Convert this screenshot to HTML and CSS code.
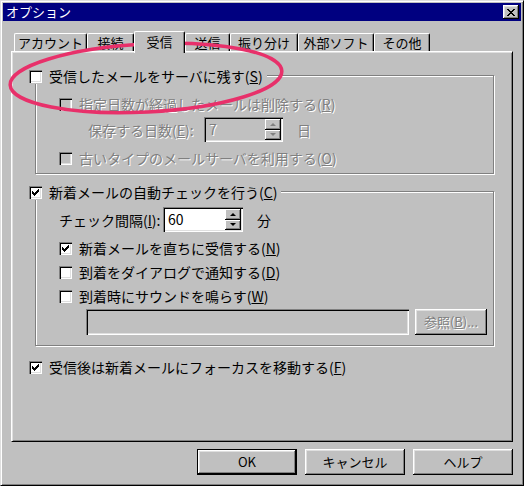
FILE: index.html
```html
<!DOCTYPE html>
<html lang="ja">
<head>
<meta charset="utf-8">
<title>オプション</title>
<link rel="stylesheet" href="styles.css">
</head>
<body>
<div class="window">
  <div class="titlebar">
    <span class="title">オプション</span>
    <span class="close"><svg width="8" height="7" viewBox="0 0 8 7" shape-rendering="crispEdges"><path fill="#000" d="M0 0h2v1h-2z M6 0h2v1h-2z M1 1h2v1h-2z M5 1h2v1h-2z M2 2h4v1h-4z M3 3h2v1h-2z M2 4h4v1h-4z M1 5h2v1h-2z M5 5h2v1h-2z M0 6h2v1h-2z M6 6h2v1h-2z"/></svg></span>
  </div>
  <div class="tabs">
    <div class="tab t1">アカウント</div>
    <div class="tab t2">接続</div>
    <div class="tab t3 sel">受信</div>
    <div class="tab t4">送信</div>
    <div class="tab t5">振り分け</div>
    <div class="tab t6">外部ソフト</div>
    <div class="tab t7">その他</div>
  </div>
  <div class="panel">
    <div class="group g1">
      <div class="legend"><span class="cb"></span><span>受信したメールをサーバに残す(<u>S</u>)</span></div>
      <div class="row ind r-del"><span class="cb dis"></span><span class="disabled">指定日数が経過したメールは削除する(<u>R</u>)</span></div>
      <div class="spinrow r-days">
        <span class="lbl lbl-days disabled">保存する日数(<u>E</u>):</span>
        <div class="spin dis w79"><span class="spin-val disabled">7</span><span class="spin-btns"><span class="sb"><i class="up"></i></span><span class="sb"><i class="dn"></i></span></span></div>
        <span class="unit disabled">日</span>
      </div>
      <div class="row ind r-old"><span class="cb dis"></span><span class="disabled">古いタイプのメールサーバを利用する(<u>O</u>)</span></div>
    </div>
    <div class="group g2">
      <div class="legend"><span class="cb"><svg width="7" height="7" viewBox="0 0 7 7" shape-rendering="crispEdges"><path fill="#000" d="M6 0h1v1h-1z M5 1h2v1h-2z M0 2h1v1h-1z M4 2h3v1h-3z M0 3h2v1h-2z M3 3h3v1h-3z M0 4h5v1h-5z M1 5h3v1h-3z M2 6h1v1h-1z"/></svg></span><span>新着メールの自動チェックを行う(<u>C</u>)</span></div>
      <div class="spinrow r-int">
        <span class="lbl lbl-int">チェック間隔(<u>I</u>):</span>
        <div class="spin w80"><span class="spin-val">60</span><span class="spin-btns"><span class="sb"><i class="up"></i></span><span class="sb"><i class="dn"></i></span></span></div>
        <span class="unit">分</span>
      </div>
      <div class="row ind r-next"><span class="cb"><svg width="7" height="7" viewBox="0 0 7 7" shape-rendering="crispEdges"><path fill="#000" d="M6 0h1v1h-1z M5 1h2v1h-2z M0 2h1v1h-1z M4 2h3v1h-3z M0 3h2v1h-2z M3 3h3v1h-3z M0 4h5v1h-5z M1 5h3v1h-3z M2 6h1v1h-1z"/></svg></span><span>新着メールを直ちに受信する(<u>N</u>)</span></div>
      <div class="row ind r-next"><span class="cb"></span><span>到着をダイアログで通知する(<u>D</u>)</span></div>
      <div class="row ind r-next"><span class="cb"></span><span>到着時にサウンドを鳴らす(<u>W</u>)</span></div>
      <div class="filerow">
        <div class="field"></div>
        <div class="btn small"><span class="disabled">参照(<u>B</u>)...</span></div>
      </div>
    </div>
    <div class="row r-last"><span class="cb"><svg width="7" height="7" viewBox="0 0 7 7" shape-rendering="crispEdges"><path fill="#000" d="M6 0h1v1h-1z M5 1h2v1h-2z M0 2h1v1h-1z M4 2h3v1h-3z M0 3h2v1h-2z M3 3h3v1h-3z M0 4h5v1h-5z M1 5h3v1h-3z M2 6h1v1h-1z"/></svg></span><span>受信後は新着メールにフォーカスを移動する(<u>F</u>)</span></div>
  </div>
  <div class="buttons">
    <div class="btn default">OK</div>
    <div class="btn">キャンセル</div>
    <div class="btn">ヘルプ</div>
  </div>
  <svg class="ring" width="524" height="486" viewBox="0 0 524 486"><ellipse cx="146" cy="78" rx="136" ry="34" transform="rotate(-3 146 78)" fill="none" stroke="#e8306a" stroke-width="3.5"/></svg>
</div>
</body>
</html>
```

FILE: styles.css
```css
body {
  margin: 0;
  background: #c0c0c0;
  font-family: "Noto Sans CJK JP", "Noto Sans", sans-serif;
  font-size: 14px;
  line-height: 16px;
  color: #000;
}
u { text-underline-offset: 1px; }

.window {
  position: relative;
  width: 524px;
  height: 486px;
  box-sizing: border-box;
  border: 1px solid;
  border-color: #dfdfdf #000 #000 #dfdfdf;
  box-shadow: inset 1px 1px #fff, inset -1px -1px #808080;
  padding: 2px;
  background: #c0c0c0;
}

.titlebar {
  height: 18px;
  background: #000080;
  color: #fff;
  display: flex;
  align-items: center;
  justify-content: space-between;
  padding: 0 2px 0 3px;
  font-size: 13px;
}
.close {
  width: 16px;
  height: 14px;
  box-sizing: border-box;
  background: #c0c0c0;
  box-shadow: inset -1px -1px #000, inset 1px 1px #fff, inset -2px -2px #808080, inset 2px 2px #dfdfdf;
  display: flex;
  align-items: center;
  justify-content: center;
}

.tabs {
  display: flex;
  align-items: flex-end;
  height: 20px;
  margin: 10px 8px 0;
  padding-left: 3px;
}
.tab {
  height: 18px;
  box-sizing: border-box;
  border-top: 1px solid #fff;
  border-left: 1px solid #fff;
  border-right: 1px solid #000;
  border-radius: 2px 2px 0 0;
  box-shadow: inset -1px 0 #808080;
  background: #c0c0c0;
  display: flex;
  align-items: center;
  justify-content: center;
  font-size: 13px;
  flex: none;
}
.tab.sel {
  height: 22px;
  margin-bottom: -2px;
  position: relative;
  z-index: 1;
  padding-bottom: 2px;
}
.t1 { width: 73px; }
.t2 { width: 47px; }
.t3 { width: 51px; }
.t4 { width: 45px; }
.t5 { width: 68px; }
.t6 { width: 76px; }
.t7 { width: 56px; }

.panel {
  margin: 0 8px;
  height: 391px;
  box-sizing: border-box;
  border: 1px solid;
  border-color: #fff #000 #000 #fff;
  box-shadow: inset 1px 1px #dfdfdf, inset -1px -1px #808080;
  padding: 23px 0 0 23px;
}

.group {
  width: 459px;
  box-sizing: border-box;
  border: 1px solid #808080;
  box-shadow: inset 1px 1px #fff, 1px 1px #fff;
}
.g1 { height: 99px; }
.g2 { height: 155px; margin-top: 17px; }

.legend {
  display: flex;
  align-items: center;
  gap: 7px;
  height: 16px;
  width: max-content;
  margin: -8px 0 0 -7px;
  padding-right: 4px;
  background: #c0c0c0;
}

.cb {
  width: 13px;
  height: 13px;
  box-sizing: border-box;
  background: #fff;
  box-shadow: inset 1px 1px #808080, inset 2px 2px #000, inset -1px -1px #fff, inset -2px -2px #dfdfdf;
  flex: none;
  display: flex;
  align-items: center;
  justify-content: center;
}
.cb.dis { background: #c0c0c0; }

.row {
  display: flex;
  align-items: center;
  gap: 7px;
  height: 16px;
}
.ind { margin-left: 23px; }
.r-del { margin-top: 12px; }
.r-old { margin-top: 8px; }
.r-next { margin-top: 8px; }
.r-last { margin-top: 13px; margin-left: -6px; }

.disabled {
  color: #808080;
  text-shadow: 1px 1px 0 #fff;
}

.spinrow {
  display: flex;
  align-items: center;
  height: 25px;
}
.r-days { margin: 5px 0 0 52px; }
.r-int { margin: 7px 0 0 23px; }
.lbl { flex: none; }
.lbl-days { width: 116px; }
.lbl-int { width: 104px; }
.unit { margin-left: 14px; }

.spin {
  display: flex;
  height: 25px;
  box-sizing: border-box;
  padding: 2px;
  background: #fff;
  box-shadow: inset 1px 1px #808080, inset 2px 2px #000, inset -1px -1px #fff, inset -2px -2px #dfdfdf;
}
.spin.dis { background: #c0c0c0; }
.w79 { width: 79px; }
.w80 { width: 80px; }
.spin-val {
  flex: 1;
  padding-left: 3px;
  line-height: 21px;
}
.spin-btns {
  width: 16px;
  display: flex;
  flex-direction: column;
}
.sb {
  flex: 1;
  background: #c0c0c0;
  box-shadow: inset -1px -1px #000, inset 1px 1px #fff, inset -2px -2px #808080;
  display: flex;
  align-items: center;
  justify-content: center;
}
.up, .dn {
  width: 0;
  height: 0;
  border-left: 3px solid transparent;
  border-right: 3px solid transparent;
}
.up { border-bottom: 3px solid #000; }
.dn { border-top: 3px solid #000; }
.spin.dis .up { border-bottom-color: #808080; }
.spin.dis .dn { border-top-color: #808080; }

.filerow {
  display: flex;
  gap: 6px;
  margin: 5px 0 0 50px;
}
.field {
  width: 323px;
  height: 26px;
  box-sizing: border-box;
  background: #c0c0c0;
  box-shadow: inset 1px 1px #808080, inset 2px 2px #000, inset -1px -1px #fff, inset -2px -2px #dfdfdf;
}

.btn {
  width: 100px;
  height: 26px;
  box-sizing: border-box;
  background: #c0c0c0;
  box-shadow: inset -1px -1px #000, inset 1px 1px #fff, inset -2px -2px #808080, inset 2px 2px #dfdfdf;
  display: flex;
  align-items: center;
  justify-content: center;
  font-size: 13px;
}
.btn.small { width: 72px; }
.btn.default { border: 1px solid #000; }

.buttons {
  display: flex;
  justify-content: flex-end;
  gap: 8px;
  margin: 7px 8px 0;
}

.ring {
  position: absolute;
  left: -1px;
  top: -1px;
  pointer-events: none;
}
```
